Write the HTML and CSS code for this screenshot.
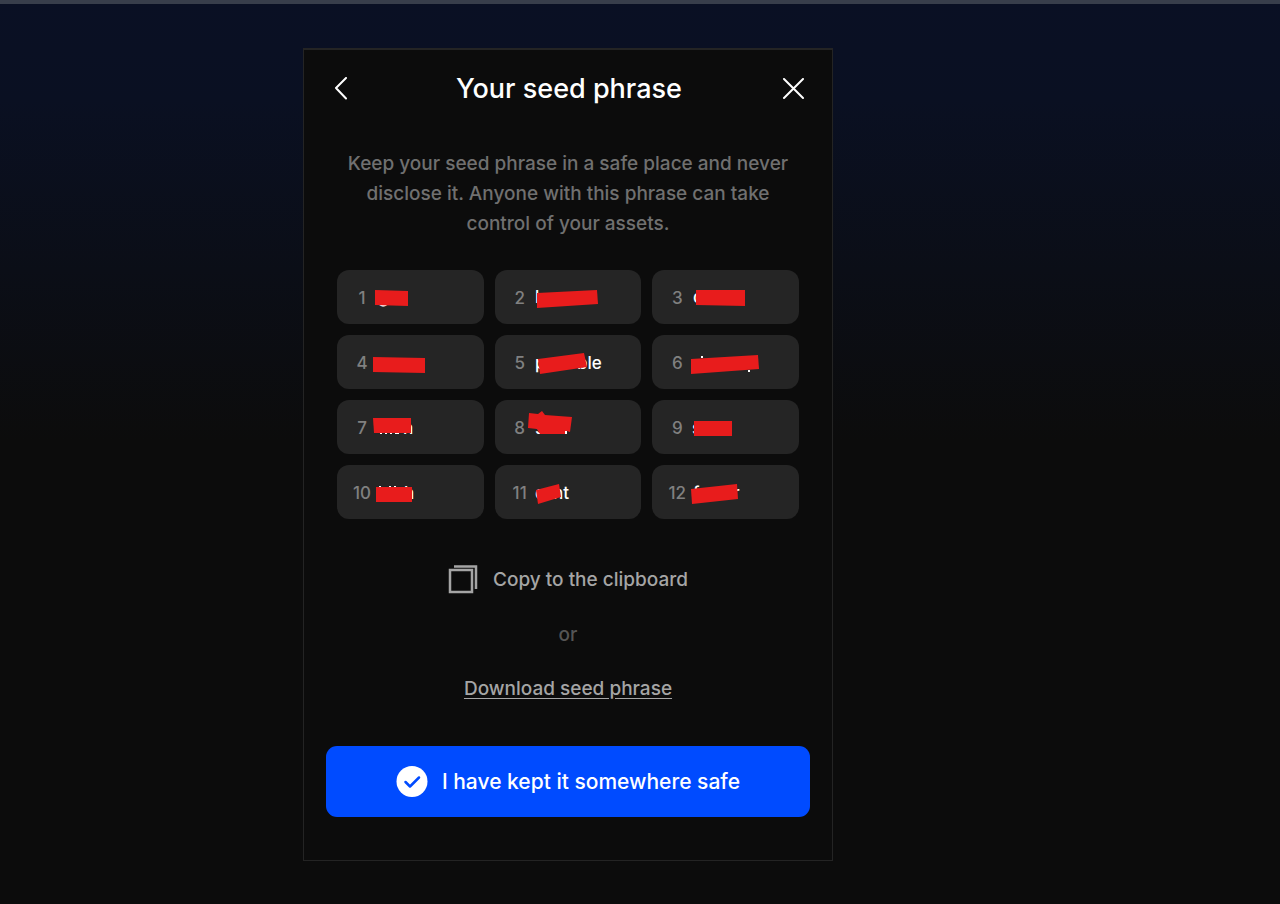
FILE: index.html
```html
<!DOCTYPE html>
<html lang="en">
<head>
<meta charset="utf-8">
<title>Your seed phrase</title>
<link rel="stylesheet" href="styles.css">
</head>
<body>
<main class="card">
  <header class="head">
    <button class="icon-btn" aria-label="Back"><svg width="14" height="24" viewBox="0 0 14 24"><path d="M12 1 2 11 12 21.500"/></svg></button>
    <h1 class="title">Your seed phrase</h1>
    <button class="icon-btn close" aria-label="Close"><svg width="22" height="22" viewBox="0 0 22 22"><path d="M2 1 21 20M21 1 2 20"/></svg></button>
  </header>
  <p class="intro">Keep your seed phrase in a safe place and never<br>disclose it. Anyone with this phrase can take<br>control of your assets.</p>
  <ol class="words">
    <li class="cell"><span class="num">1</span><svg class="mask"><text x="41" y="33">g</text><path d="M38 20 71 21V36L38 35Z"/></svg></li>
    <li class="cell"><span class="num">2</span><svg class="mask"><text x="40" y="33">l</text><path d="M42 23 102 20 103 34 42 38Z"/></svg></li>
    <li class="cell"><span class="num">3</span><svg class="mask"><text x="41" y="33">c</text><path d="M44 20H93V36L44 35Z"/></svg></li>
    <li class="cell"><span class="num">4</span><svg class="mask"><path d="M36 22 88 23V38L36 37Z"/></svg></li>
    <li class="cell"><span class="num">5</span><svg class="mask"><text x="40" y="34">p</text><text x="82" y="34">ble</text><path d="M43 24 89 18 92 32 45 39Z"/></svg></li>
    <li class="cell"><span class="num">6</span><svg class="mask"><path d="M39 24 106 20 107 34 39 39Z"/><path class="bit" d="M49 21h2v2h-2ZM96 35h2v2h-2Z"/></svg></li>
    <li class="cell"><span class="num">7</span><svg class="mask"><text x="66" y="34">h</text><path d="M36 18H74V33H37Z"/><path class="bit" d="M43 33h2v1h-2ZM48 33h2v1h-2ZM53 33h2v1h-2ZM58 33h4v1h-4Z"/></svg></li>
    <li class="cell"><span class="num">8</span><svg class="mask"><text x="40" y="34">s</text><path d="M34 13 43 14 47 11 50 15 77 17 75 32 72 31V34H45L42 29 33 28Z"/><path class="bit" d="M70 31h2v3h-2Z"/></svg></li>
    <li class="cell"><span class="num">9</span><svg class="mask"><text x="40" y="34">s</text><path d="M42 21H80V36H42Z"/></svg></li>
    <li class="cell"><span class="num">10</span><svg class="mask"><text x="67" y="34">h</text><path d="M39 22H75V37H39Z"/><path class="bit" d="M42 21h2v1h-2ZM52 21h2v1h-2ZM57 21h2v1h-2Z"/></svg></li>
    <li class="cell"><span class="num">11</span><svg class="mask"><text x="40" y="34">c</text><text x="58" y="34">nt</text><path d="M41 25 64 19 66 32 43 39Z"/></svg></li>
    <li class="cell"><span class="num">12</span><svg class="mask"><text x="41" y="34">f</text><text x="81" y="34">r</text><path d="M39 24 85 19 86 34 40 39Z"/></svg></li>
  </ol>
  <button class="copy"><svg width="30" height="30" viewBox="0 0 30 30"><path d="M2 5H24V27H2ZM6 1.500H28V24"/></svg>Copy to the clipboard</button>
  <p class="or">or</p>
  <a class="download" href="#">Download seed phrase</a>
  <button class="confirm"><svg width="32" height="32" viewBox="0 0 32 32"><circle cx="16" cy="15.500" r="15.500"/><path d="M9.500 16 14 20.500 23 11.500"/></svg>I have kept it somewhere safe</button>
</main>
</body>
</html>
```
FILE: styles.css
```css
* { box-sizing: border-box; }
body {
  margin: 0;
  min-height: 100vh;
  padding: 44px 0 40px 303px;
  border-top: 4px solid #383e4b;
  background: linear-gradient(#0a1024 0, #0a1022 100px, #0c0c0c 440px);
  font-family: Inter, "Liberation Sans", sans-serif;
  font-weight: 500;
  color: #fff;
}
button { font: inherit; color: inherit; border: 0; background: none; padding: 0; cursor: pointer; }
.card {
  display: flex;
  flex-direction: column;
  align-items: center;
  width: 100%;
  max-width: 530px;
  padding: 21px 22px 43px;
  border: 1px solid #242424;
  border-top-width: 2px;
  background: #0c0c0c;
}
.head {
  display: grid;
  grid-template-columns: 24px 1fr 24px;
  align-items: center;
  align-self: stretch;
  height: 36px;
  padding: 0 6px 0 8px;
}
.icon-btn { display: flex; }
.close { justify-content: flex-end; }
.icon-btn svg { fill: none; stroke: #fff; stroke-width: 2; stroke-linecap: round; stroke-linejoin: round; }
.title { margin: 0; font-size: 27px; font-weight: 500; line-height: 36px; text-align: center; }
.intro { margin: 42px 0 31px; font-size: 19px; line-height: 30px; text-align: center; color: #707070; }
.words {
  display: grid;
  grid-template-columns: repeat(3, 1fr);
  gap: 11px;
  align-self: stretch;
  margin: 0 11px;
  padding: 0;
  list-style: none;
}
.cell { position: relative; display: flex; align-items: center; height: 54px; padding: 1px 0 0 11px; border-radius: 12px; background: #252525; }
.num { width: 28px; text-align: center; font-size: 17px; color: #808080; }
.mask { position: absolute; inset: 0; width: 100%; height: 100%; fill: #e81c1c; }
.mask text { fill: #fff; font-size: 17px; }
.mask .bit { fill: #fff; }
.copy { display: flex; align-items: center; gap: 15px; margin-top: 45px; font-size: 19px; line-height: 32px; color: #a5a5a5; }
.copy svg { fill: none; stroke: #a5a5a5; stroke-width: 2.500; }
.or { margin: 24px 0; font-size: 19px; line-height: 30px; color: #555; }
.download { font-size: 19px; line-height: 30px; color: #a5a5a5; text-underline-offset: 3px; }
.confirm {
  display: flex;
  align-items: center;
  justify-content: center;
  align-self: stretch;
  gap: 14px;
  height: 71px;
  margin-top: 42px;
  border-radius: 11px;
  background: #004bff;
  font-size: 21px;
}
.confirm circle { fill: #fff; }
.confirm path { fill: none; stroke: #004bff; stroke-width: 2.500; stroke-linecap: round; stroke-linejoin: round; }
```
